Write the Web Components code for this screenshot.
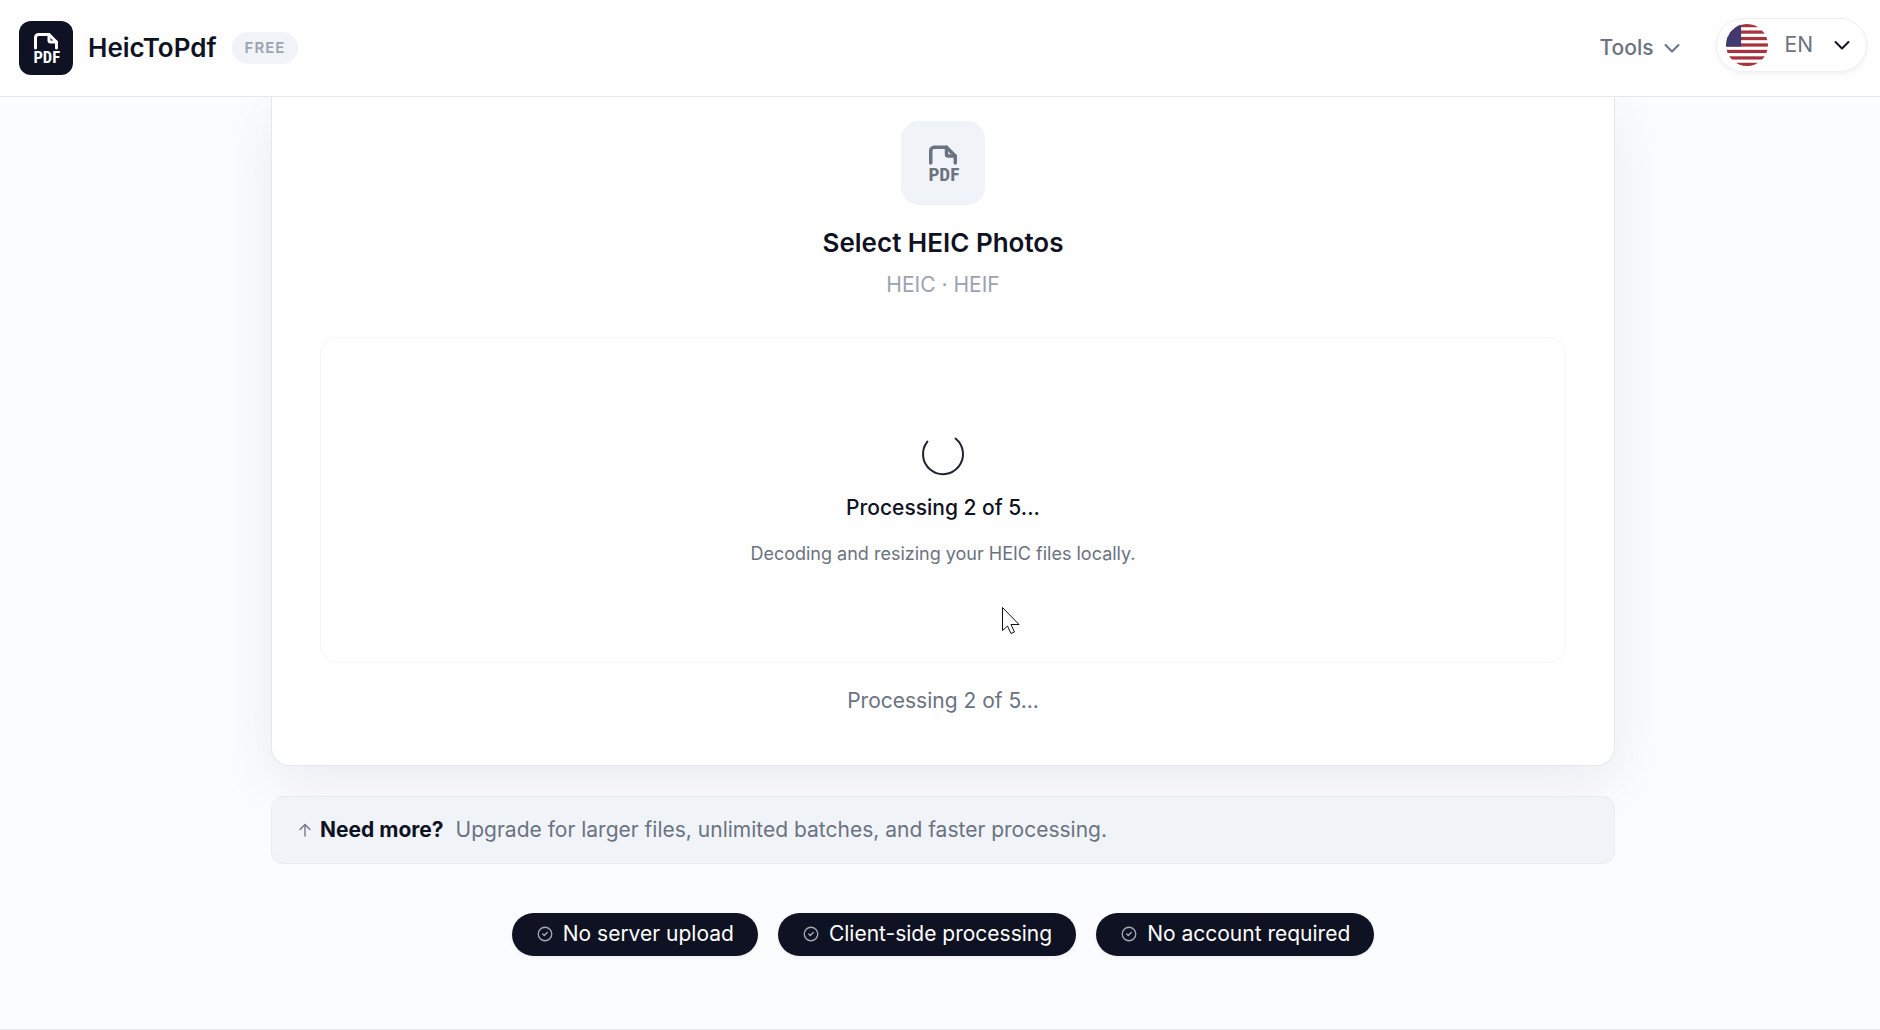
<!DOCTYPE html>
<html lang="en">
<head>
<meta charset="utf-8">
<meta name="viewport" content="width=device-width, initial-scale=1">
<title>HeicToPdf</title>
<style>
  :root {
    --ink: #0f1222;
    --muted: #6b7280;
    --soft: #9ca3af;
    --line: #e5e7eb;
    --tint: #f0f4f9;
  }
  body {
    margin: 0;
    background: #fbfcfe;
    color: var(--ink);
    font-family: Inter, "Liberation Sans", sans-serif;
    font-size: 21px;
    line-height: 32px;
  }
</style>
</head>
<body>
<site-header></site-header>
<main>
  <page-shell>
    <upload-card heading="Select HEIC Photos" formats="HEIC · HEIF" status="Processing 2 of 5...">
      <progress-panel heading="Processing 2 of 5...">Decoding and resizing your HEIC files locally.</progress-panel>
    </upload-card>
    <upgrade-banner heading="Need more?">Upgrade for larger files, unlimited batches, and faster processing.</upgrade-banner>
    <badge-row>
      <trust-badge>No server upload</trust-badge>
      <trust-badge>Client-side processing</trust-badge>
      <trust-badge>No account required</trust-badge>
    </badge-row>
  </page-shell>
</main>
<site-footer></site-footer>

<script>
// Attach an open shadow root and fill it from a markup string
function render(el, html) {
  const template = document.createElement('template');
  template.innerHTML = html;
  el.attachShadow({ mode: 'open' });
  el.shadowRoot.appendChild(template.content.cloneNode(true));
}

class PdfIcon extends HTMLElement {
  constructor() {
    super();
    render(this, `
      <style>
        :host { display: block; width: 36px; height: 36px; }
        svg { display: block; width: 100%; height: 100%; overflow: visible; }
        path { fill: none; stroke: currentColor; stroke-width: 2; stroke-linecap: round; stroke-linejoin: round; }
        text { fill: currentColor; font: bold 11px/1 "Liberation Sans Narrow", "Roboto Condensed", "DejaVu Sans Condensed", sans-serif; }
      </style>
      <svg viewBox="0 0 24 24" aria-hidden="true">
        <path d="M14 3v4a1 1 0 0 0 1 1h4"/>
        <path d="M5 12V5a2 2 0 0 1 2-2h7l5 5v4"/>
        <text x="12.5" y="22" text-anchor="middle">PDF</text>
      </svg>
    `);
  }
}
customElements.define('pdf-icon', PdfIcon);

class ChevronIcon extends HTMLElement {
  constructor() {
    super();
    render(this, `
      <style>
        :host { display: block; width: 24px; height: 24px; }
        svg { display: block; }
      </style>
      <svg width="24" height="24" viewBox="0 0 24 24" fill="none" stroke="currentColor" stroke-width="2" stroke-linecap="round" stroke-linejoin="round" aria-hidden="true"><path d="M5.500 9l6.500 6.500 6.500-6.500"/></svg>
    `);
  }
}
customElements.define('chevron-icon', ChevronIcon);

class FlagIcon extends HTMLElement {
  constructor() {
    super();
    let stripes = '';
    for (let i = 0; i < 13; i += 2) {
      stripes += `<rect y="${i * 3}" width="39" height="3" fill="#a5323c"/>`;
    }
    render(this, `
      <style>
        :host { display: block; width: 42px; height: 42px; border-radius: 50%; overflow: hidden; }
        svg { display: block; width: 100%; height: 100%; }
      </style>
      <svg viewBox="0 0 39 39" aria-hidden="true">
        <rect width="39" height="39" fill="#fff"/>
        ${stripes}
        <rect width="14" height="21" fill="#41396f"/>
      </svg>
    `);
  }
}
customElements.define('flag-icon', FlagIcon);

class SiteHeader extends HTMLElement {
  constructor() {
    super();
    render(this, `
      <style>
        :host { display: block; position: sticky; top: 0; z-index: 10; background: #fefefe; border-bottom: 1px solid var(--line); }
        header { display: flex; align-items: flex-start; justify-content: space-between; padding: 18px 13px 21px 19px; }
        .brand { display: flex; align-items: center; gap: 15px; color: inherit; text-decoration: none; padding-top: 3px; }
        .logo { display: flex; align-items: center; justify-content: center; width: 54px; height: 54px; border-radius: 12px; background: var(--ink); color: #fff; }
        .name { font-size: 26px; font-weight: 600; }
        .tag { padding: 4px 13px; border-radius: 16px; background: var(--tint); color: var(--soft); font-size: 15px; line-height: 24px; font-weight: 600; letter-spacing: 1px; }
        nav { display: flex; align-items: center; gap: 32px; }
        button { display: flex; align-items: center; margin: 0; padding: 0; border: 0; background: none; color: var(--muted); font: inherit; cursor: pointer; }
        .tools { gap: 6px; font-weight: 500; padding-top: 6px; }
        .lang { gap: 17px; padding: 5px 12px 5px 9px; border: 1px solid #eef0f3; border-radius: 27px; background: #fff; box-shadow: 0 2px 4px rgba(15, 18, 34, .05); }
        .lang chevron-icon { color: var(--ink); }
      </style>
      <header>
        <a class="brand" href="#">
          <span class="logo"><pdf-icon></pdf-icon></span>
          <span class="name">HeicToPdf</span>
          <span class="tag">FREE</span>
        </a>
        <nav>
          <button class="tools" type="button">Tools <chevron-icon></chevron-icon></button>
          <button class="lang" type="button" aria-label="Language: EN"><flag-icon></flag-icon>EN<chevron-icon></chevron-icon></button>
        </nav>
      </header>
    `);
  }
}
customElements.define('site-header', SiteHeader);

class PageShell extends HTMLElement {
  constructor() {
    super();
    render(this, `
      <style>
        :host { display: block; padding: 0 0 73px 6px; }
        .column { max-width: 1344px; margin: 0 auto; }
      </style>
      <div class="column"><slot></slot></div>
    `);
  }
}
customElements.define('page-shell', PageShell);

class UploadCard extends HTMLElement {
  constructor() {
    super();
    render(this, `
      <style>
        :host { display: block; }
        section {
          padding: 24px 48px; border: 1px solid var(--line); border-top: 0;
          border-radius: 0 0 18px 18px; background: #fff; text-align: center;
          box-shadow: 0 16px 60px rgba(15, 18, 34, .07);
        }
        .tile { display: flex; align-items: center; justify-content: center; width: 84px; height: 84px; margin: 0 auto 20px; border-radius: 18px; background: var(--tint); color: var(--muted); }
        .tile pdf-icon { width: 42px; height: 42px; }
        h2 { margin: 0 0 8px; font-size: 26px; line-height: 36px; font-weight: 600; }
        p { margin: 0; }
        .formats { margin-bottom: 36px; color: var(--soft); }
        .status { margin: 22px 0 24px; color: var(--muted); }
      </style>
      <section>
        <div class="tile"><pdf-icon></pdf-icon></div>
        <h2></h2>
        <p class="formats"></p>
        <slot></slot>
        <p class="status" role="status"></p>
      </section>
    `);
  }

  connectedCallback() {
    this.shadowRoot.querySelector('h2').textContent = this.getAttribute('heading');
    this.shadowRoot.querySelector('.formats').textContent = this.getAttribute('formats');
    this.shadowRoot.querySelector('.status').textContent = this.getAttribute('status');
  }
}
customElements.define('upload-card', UploadCard);

class ProgressPanel extends HTMLElement {
  constructor() {
    super();
    render(this, `
      <style>
        :host {
          display: flex; flex-direction: column; align-items: center; gap: 16px; position: relative;
          padding: 94px 24px; border: 1px solid #f6f6f7; border-radius: 18px; background: #fefefe;
        }
        .spinner { display: block; }
        .title { margin: 0; font-weight: 500; }
        .note { margin: 0; color: var(--muted); font-size: 18px; line-height: 28px; }
        .pointer { position: absolute; left: calc(50% + 58px); top: 268px; }
      </style>
      <svg class="spinner" width="44" height="44" viewBox="0 0 44 44" fill="none" stroke="#1f2230" stroke-width="2" stroke-linecap="round" aria-hidden="true"><path d="M34.5 6.5A20 20 0 1 1 6.4 9.6"/></svg>
      <p class="title"></p>
      <p class="note"><slot></slot></p>
      <svg class="pointer" width="20" height="29" viewBox="0 0 20 29" fill="#fff" stroke="#111" stroke-width="1" aria-hidden="true"><path d="M1.5 1.5v23l5-4.5 3.5 7.5 3.5-1.500-3.500-7.500h8z"/></svg>
    `);
  }

  connectedCallback() {
    this.shadowRoot.querySelector('.title').textContent = this.getAttribute('heading');
  }
}
customElements.define('progress-panel', ProgressPanel);

class UpgradeBanner extends HTMLElement {
  constructor() {
    super();
    render(this, `
      <style>
        :host { display: block; margin-top: 30px; }
        div { display: flex; align-items: center; padding: 17px 24px; border: 1px solid #e8ebef; border-radius: 12px; background: var(--tint); color: var(--muted); }
        svg { flex: none; margin-right: 6px; }
        strong { margin-right: 12px; color: var(--ink); font-weight: 700; }
      </style>
      <div>
        <svg width="18" height="18" viewBox="0 0 18 18" fill="none" stroke="currentColor" stroke-width="1.3" stroke-linecap="round" stroke-linejoin="round" aria-hidden="true"><path d="M9 15V3.500M4 8.500l5-5 5 5"/></svg>
        <strong></strong>
        <span><slot></slot></span>
      </div>
    `);
  }

  connectedCallback() {
    this.shadowRoot.querySelector('strong').textContent = this.getAttribute('heading');
  }
}
customElements.define('upgrade-banner', UpgradeBanner);

class BadgeRow extends HTMLElement {
  constructor() {
    super();
    render(this, `
      <style>
        :host { display: flex; flex-wrap: wrap; justify-content: center; gap: 20px; margin-top: 49px; }
      </style>
      <slot></slot>
    `);
  }
}
customElements.define('badge-row', BadgeRow);

class TrustBadge extends HTMLElement {
  constructor() {
    super();
    render(this, `
      <style>
        :host { display: flex; align-items: center; gap: 9px; padding: 5px 24px 6px; border-radius: 22px; background: var(--ink); color: #fff; box-shadow: 0 2px 4px rgba(15, 18, 34, .05); }
        svg { flex: none; color: #a3a8b8; }
      </style>
      <svg width="18" height="18" viewBox="0 0 24 24" fill="none" stroke="currentColor" stroke-width="1.8" stroke-linecap="round" stroke-linejoin="round" aria-hidden="true"><circle cx="12" cy="12" r="9"/><path d="M9 12l2 2 4-4"/></svg>
      <span><slot></slot></span>
    `);
  }
}
customElements.define('trust-badge', TrustBadge);

class SiteFooter extends HTMLElement {
  constructor() {
    super();
    render(this, `
      <style>
        :host { display: block; border-top: 1px solid var(--line); }
      </style>
      <footer></footer>
    `);
  }
}
customElements.define('site-footer', SiteFooter);
</script>
</body>
</html>
